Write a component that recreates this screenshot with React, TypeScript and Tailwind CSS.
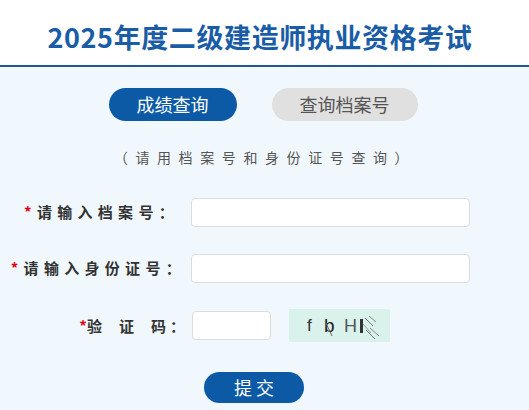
import React from 'react';

const font = { fontFamily: '"Noto Sans CJK SC", "Noto Sans", sans-serif' };

function Captcha() {
  // captcha image: a few letters with noise strokes
  return (
    <div className="ml-[18px] h-[33px] w-[101px] bg-[#d9f2ec]">
      <svg width="101" height="33" viewBox="0 0 101 33">
        <text x="18" y="22" fontSize="17" fill="#333" fontFamily="Liberation Sans, sans-serif">f</text>
        <text x="35" y="23" fontSize="19" fill="#222" fontFamily="Liberation Sans, sans-serif">b</text>
        <text x="55" y="23" fontSize="18" fill="#555" fontFamily="Liberation Sans, sans-serif">H</text>
        <rect x="71" y="10" width="3" height="14" fill="#333" />
        <path d="M36 12 L43 27" stroke="#666" strokeWidth="1" />
        <path d="M76 9 L84 17" stroke="#777" strokeWidth="1" />
        <path d="M80 7 L87 13" stroke="#888" strokeWidth="1" />
        <path d="M77 21 L86 30" stroke="#777" strokeWidth="1" />
        <path d="M81 19 L90 27" stroke="#888" strokeWidth="1" />
        <path d="M74 15 L82 24" stroke="#999" strokeWidth="1" />
      </svg>
    </div>
  );
}

export default function App() {
  return (
    <div className="w-[529px] h-[410px] overflow-hidden bg-[#f0f8fd]" style={font}>
      {/* header */}
      <div className="h-[67px] bg-white border-b-2 border-[#1d5a93] flex items-center justify-center pr-[9px] pt-[8px]">
        <h1 className="text-[27px] leading-[30px] font-bold text-[#1a5da6] tracking-[0.6px]">2025年度二级建造师执业资格考试</h1>
      </div>

      {/* tabs */}
      <div className="flex justify-center gap-[35px] mt-[21px] pr-[3px]">
        <button className="w-[128px] h-[33px] rounded-full bg-[#0c5aa6] text-white text-[18px] leading-[33px]">成绩查询</button>
        <button className="w-[146px] h-[33px] rounded-full bg-[#e0e0e0] text-[#555] text-[18px] leading-[33px]">查询档案号</button>
      </div>

      <p className="mt-[26px] h-[20px] leading-[20px] text-center text-[14px] text-[#555] tracking-[7.6px] pl-[1px]">（请用档案号和身份证号查询）</p>

      {/* form */}
      <div className="mt-[30px] flex flex-col">
        <div className="flex items-center h-[30px]">
          <label className="w-[186px] text-right pr-[7px] text-[15px] leading-[20px] font-bold text-[#333] tracking-[5.3px]">
            <span className="text-[#e60012]">*</span>请输入档案号：
          </label>
          <input className="ml-[5px] w-[279px] h-[29px] bg-white border border-[#dcdcdc] rounded-[4px] outline-none" />
        </div>
        <div className="flex items-center h-[30px] mt-[26px]">
          <label className="w-[186px] text-right pr-0 text-[15px] leading-[20px] font-bold text-[#333] tracking-[5.3px]">
            <span className="text-[#e60012]">*</span>请输入身份证号：
          </label>
          <input className="ml-[5px] w-[279px] h-[29px] bg-white border border-[#dcdcdc] rounded-[4px] outline-none" />
        </div>
        <div className="flex items-center h-[33px] mt-[26px]">
          <label className="w-[186px] text-right pr-[1px] text-[15px] leading-[20px] font-bold text-[#333]">
            <span className="text-[#e60012]">*</span>验<span className="ml-[17px]">证</span><span className="ml-[17px]">码</span><span className="ml-[4px]">：</span>
          </label>
          <input className="ml-[6px] w-[79px] h-[29px] bg-white border border-[#dcdcdc] rounded-[4px] outline-none" />
          <Captcha />
        </div>
      </div>

      <div className="flex justify-center mt-[30px] pr-[21px]">
        <button className="w-[100px] h-[31px] rounded-full bg-[#0c5aa6] text-white text-[18px] leading-[31px] tracking-[4px] pl-[4px]">提交</button>
      </div>
    </div>
  );
}
